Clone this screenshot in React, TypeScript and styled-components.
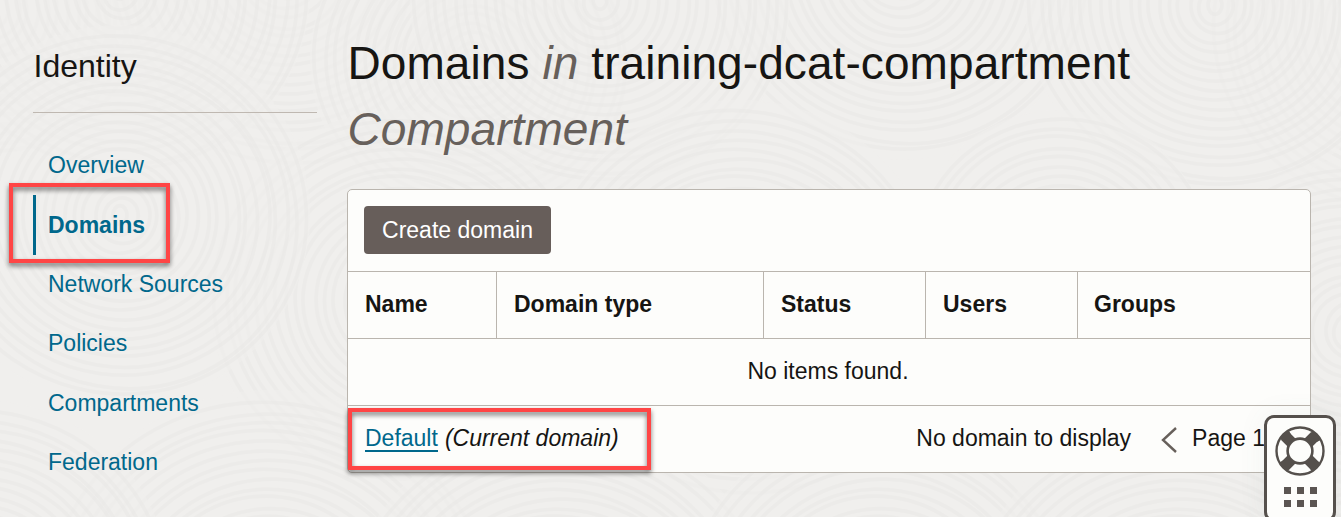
import React from "react";
import styled, { createGlobalStyle, css } from "styled-components";

const Global = createGlobalStyle`
  *, *::before, *::after { box-sizing: border-box; }
  html, body { margin: 0; padding: 0; }
  body {
    overflow: hidden;
    background: #f0efed;
    color: #161513;
    font-family: "Liberation Sans", Arial, sans-serif;
    font-size: 23px;
  }
`;

const Page = styled.div`
  position: relative;
  height: 517px;
  overflow: hidden;
  display: flex;
  padding: 0 30px 0 33px;
`;

const Backdrop = styled.svg`
  position: absolute;
  inset: 0;
  width: 100%;
  height: 100%;
`;

const Sidebar = styled.aside`
  position: relative;
  width: 284px;
  flex: none;
  margin-right: 30px;
`;

const SidebarTitle = styled.h2`
  margin: 0;
  height: 113px;
  padding: 47px 0 0 0.5px;
  border-bottom: 1px solid #bfb8b1;
  font-size: 32px;
  line-height: 38px;
  font-weight: 400;
`;

const Nav = styled.nav`
  display: flex;
  flex-direction: column;
  padding-top: 23px;
`;

const NavItem = styled.a<{ $active?: boolean }>`
  position: relative;
  display: block;
  height: 59.4px;
  line-height: 59.4px;
  padding-left: 12px;
  border-left: 3px solid transparent;
  color: #00688c;
  text-decoration: none;
  ${(p) => p.$active && css`
    border-left-color: #00688c;
    font-weight: 700;
    line-height: 61.4px;
  `}
`;

const Highlight = styled.span<{ $x: number; $y: number; $w: number; $h: number }>`
  position: absolute;
  left: ${(p) => p.$x}px;
  top: ${(p) => p.$y}px;
  width: ${(p) => p.$w}px;
  height: ${(p) => p.$h}px;
  border: 4px solid #ff4545;
  filter: drop-shadow(0 3px 2.5px rgba(0, 0, 0, 0.55));
  pointer-events: none;
`;

const Main = styled.main`
  position: relative;
  width: 964px;
  flex: none;
`;

const Title = styled.h1`
  margin: 0;
  height: 189px;
  padding: 30px 0 0 0.5px;
  font-size: 46px;
  line-height: 66px;
  font-weight: 400;
  letter-spacing: 0.08px;
`;

const Muted = styled.i`
  color: #67605b;
`;

const Card = styled.section`
  height: 284px;
  border: 1px solid #bab5ae;
  border-radius: 5px;
  background: #fdfdfb;
`;

const Toolbar = styled.div`
  height: 82px;
  padding: 16px;
  border-bottom: 1px solid #bab5ae;
`;

const Button = styled.button`
  display: block;
  width: 187px;
  height: 48px;
  padding: 0;
  border: 0;
  border-radius: 4px;
  background: #675e5a;
  color: #fff;
  font: inherit;
`;

const HeaderRow = styled.div`
  display: grid;
  grid-template-columns: 149px 267px 162px 152px 1fr;
  height: 67px;
  border-bottom: 1px solid #bab5ae;
`;

const HeaderCell = styled.div`
  padding-left: 17px;
  line-height: 64px;
  font-weight: 700;
  border-right: 1px solid #bab5ae;
  &:last-child { border-right: 0; padding-left: 16px; }
`;

const EmptyRow = styled.div`
  height: 67px;
  line-height: 64px;
  text-align: center;
  padding-right: 2px;
  border-bottom: 1px solid #bab5ae;
`;

const Footer = styled.div`
  position: relative;
  display: flex;
  align-items: center;
  height: 66px;
  padding: 0 45px 2px 17px;
`;

const Link = styled.a`
  margin-top: 1px;
  color: #00688c;
  text-decoration: none;
  border-bottom: 2px solid #00688c;
  padding-top: 2px;
  line-height: 23px;
`;

const Current = styled.i`
  margin-left: 7px;
`;

const Pager = styled.div`
  margin-left: auto;
  display: flex;
  align-items: center;
`;

const Chevron = styled.svg`
  margin: 3px 15px 0 30px;
`;

const Help = styled.div`
  position: absolute;
  left: 1264px;
  top: 415px;
  width: 72px;
  height: 107px;
  padding-top: 8px;
  display: flex;
  flex-direction: column;
  align-items: center;
  border: 3px solid #55504c;
  border-radius: 10px;
  background: #fdfdfb;
  box-shadow: 0 0 28px rgba(90, 110, 120, 0.07);
`;

const Dots = styled.div`
  display: grid;
  grid-template-columns: repeat(3, 7px);
  grid-auto-rows: 7px;
  gap: 6px;
  margin-top: 11px;
`;

const Dot = styled.span`
  background: #5b5552;
`;

type Swirl = [number, number, number];

/* Discs of concentric rings; later discs overlap the earlier ones. */
const swirls: Swirl[] = [
  [-10, 10, 150], [285, -30, 200], [470, 60, 160], [900, -30, 190], [1400, 30, 190],
  [120, -10, 190], [600, 0, 190], [1215, 5, 190], [1060, 260, 150],
  [400, 300, 190], [740, 300, 200], [1350, 330, 170],
  [120, 215, 190], [270, 620, 230], [-20, 590, 190], [560, 640, 220],
  [880, 620, 200], [1180, 640, 220], [1380, 650, 170],
];

const Texture = () => (
  <Backdrop viewBox="0 0 1341 517" preserveAspectRatio="none" aria-hidden="true">
    {swirls.map(([x, y, r], i) => (
      <g key={i} fill="none" stroke="#ebeae8" strokeWidth="3.6" opacity=".7">
        <circle cx={x} cy={y} r={r} fill="#f0efed" stroke="none" />
        {Array.from({ length: Math.floor(r / 10) }, (_, n) => (
          <ellipse
            key={n}
            cx={x + (n % 3) * 1.5}
            cy={y + (n % 2)}
            rx={(n + 1) * 10 - 3}
            ry={(n + 1) * 9.4}
            transform={`rotate(${(n * 23) % 40} ${x} ${y})`}
          />
        ))}
      </g>
    ))}
  </Backdrop>
);

const Lifebuoy = () => (
  <svg width="50" height="50" viewBox="0 0 50 50" fill="none" stroke="#55504c" aria-hidden="true">
    <path d="M10 10 40 40M40 10 10 40" strokeWidth="11" />
    <path d="M9 9 41 41M41 9 9 41" strokeWidth="10" strokeLinecap="butt" />
    <circle cx="25" cy="25" r="21.5" strokeWidth="5" strokeDasharray="11 22.772" strokeDashoffset="-11.386" />
    <circle cx="25" cy="25" r="23.5" strokeWidth="2.4" />
    <circle cx="25" cy="25" r="12.4" strokeWidth="2.6" fill="#fdfdfb" />
  </svg>
);

const links = ["Overview", "Domains", "Network Sources", "Policies", "Compartments", "Federation"];
const columns = ["Name", "Domain type", "Status", "Users", "Groups"];

export default function App() {
  return (
    <>
      <Global />
      <Page>
        <Texture />
        <Sidebar>
          <SidebarTitle>Identity</SidebarTitle>
          <Nav>
            {links.map((label) => (
              <NavItem key={label} $active={label === "Domains"}>{label}</NavItem>
            ))}
          </Nav>
          <Highlight $x={-24} $y={183} $w={161} $h={80} />
        </Sidebar>
        <Main>
          <Title>
            Domains <Muted>in</Muted> training-dcat-compartment<br />
            <Muted>Compartment</Muted>
          </Title>
          <Card>
            <Toolbar><Button>Create domain</Button></Toolbar>
            <HeaderRow>
              {columns.map((name) => <HeaderCell key={name}>{name}</HeaderCell>)}
            </HeaderRow>
            <EmptyRow>No items found.</EmptyRow>
            <Footer>
              <Link>Default</Link>
              <Current>(Current domain)</Current>
              <Pager>
                <span>No domain to display</span>
                <Chevron width="16" height="26" viewBox="0 0 16 26" fill="none" stroke="#67605b" strokeWidth="2.4">
                  <path d="M15 1 2 13 15 25" />
                </Chevron>
                <span>Page 1</span>
              </Pager>
              <Highlight $x={0} $y={2} $w={303} $h={62} />
            </Footer>
          </Card>
        </Main>
        <Help>
          <Lifebuoy />
          <Dots>{[0, 1, 2, 3, 4, 5].map((n) => <Dot key={n} />)}</Dots>
        </Help>
      </Page>
    </>
  );
}
